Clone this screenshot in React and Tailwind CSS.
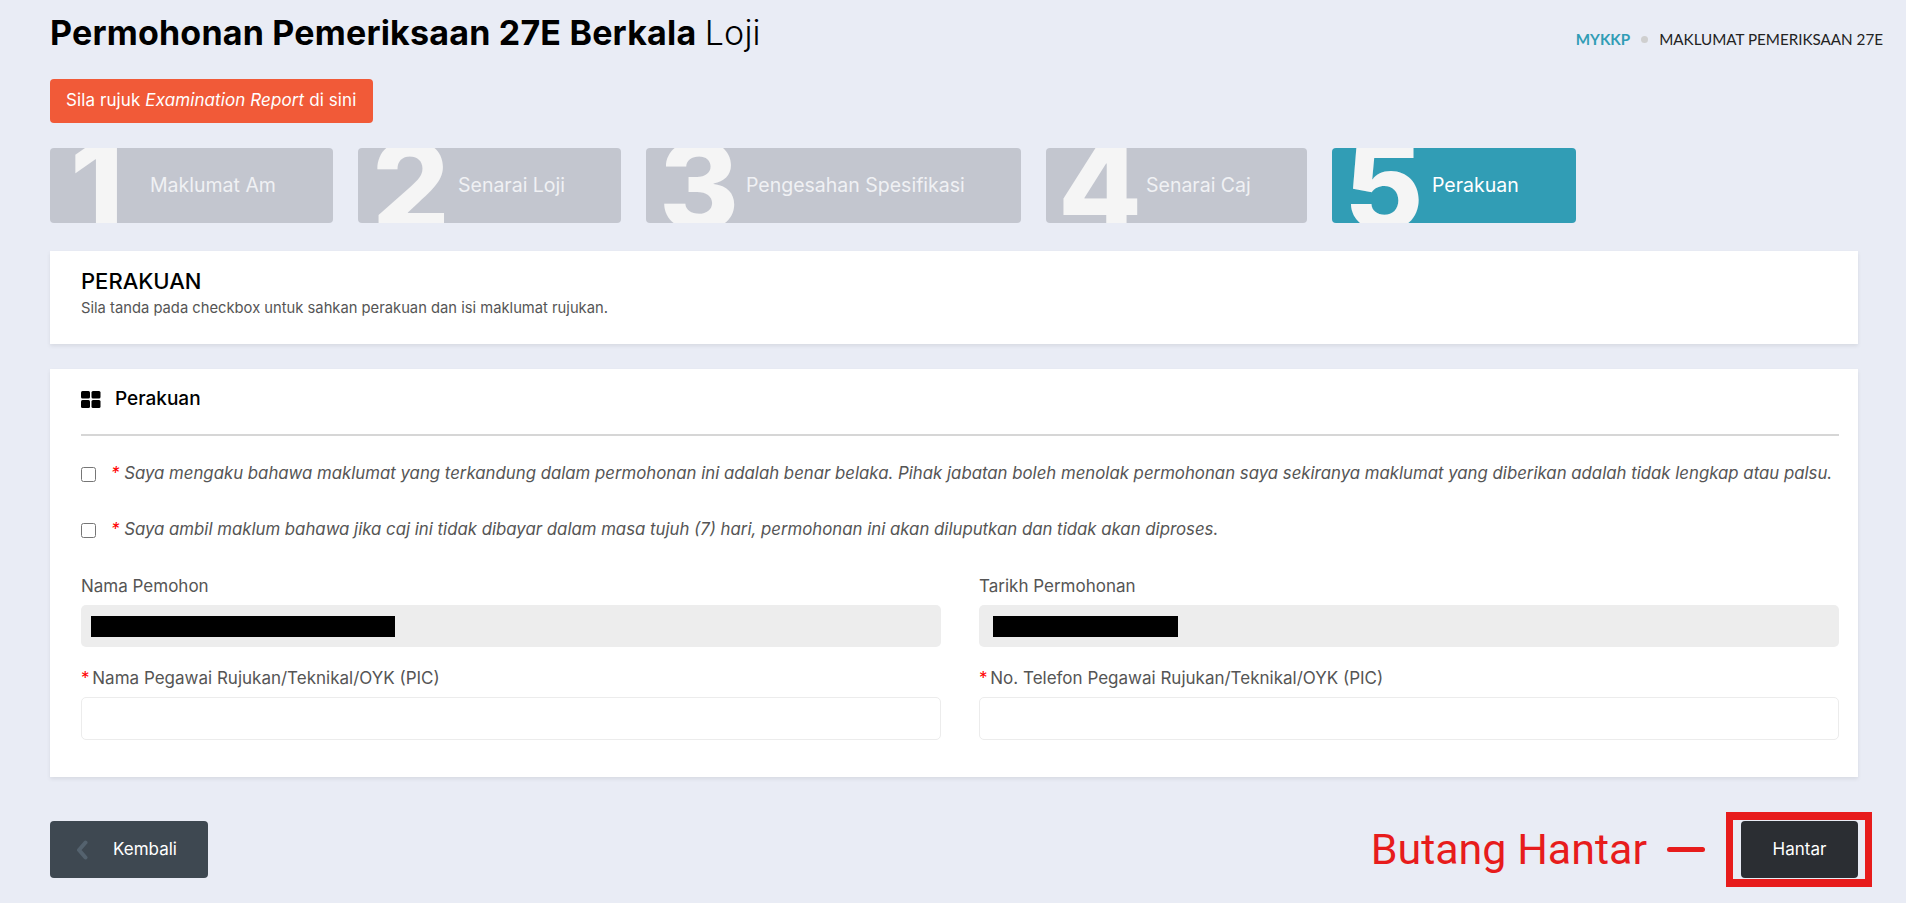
import React from 'react';

const steps = [
  { no: '1', label: 'Maklumat Am', width: 'w-[283px]', digit: 'pl-[20px]' },
  { no: '2', label: 'Senarai Loji', width: 'w-[263px]', digit: 'pl-[14px]' },
  { no: '3', label: 'Pengesahan Spesifikasi', width: 'w-[375px]', digit: 'pl-[13px]' },
  { no: '4', label: 'Senarai Caj', width: 'w-[261px]', digit: 'pl-[12px]' },
  { no: '5', label: 'Perakuan', width: 'w-[244px]', digit: 'pl-[12px]', active: true },
];

const Required = () => <span className="text-[#ff0000]">* </span>;

const App = () => {
  return (
    <div className="h-[903px] overflow-hidden bg-[#e9ecf5] pl-[50px] pr-[48px] font-['Inter',sans-serif] text-[#555]">
      {/* Page header */}
      <div className="flex items-start justify-between pt-[13px] h-[79px]">
        <h1 className="text-[34px] leading-[40px] font-bold text-black tracking-[0.2px]">
          Permohonan Pemeriksaan 27E Berkala <span className="font-light">Loji</span>
        </h1>
        <div className="flex items-center h-[26px] mt-[13px] -mr-[25px] font-['Lato',sans-serif] text-[15.2px] text-[#222]">
          <span className="font-bold text-[#319db5]">MYKKP</span>
          <span className="mx-[11px] w-[7px] h-[7px] rounded-full bg-[#cfcfcf]"></span>
          <span>MAKLUMAT PEMERIKSAAN 27E</span>
        </div>
      </div>

      <button className="block h-[44px] w-[323px] rounded-[4px] bg-[#f15a38] text-left pl-[16px] text-[17px] tracking-[0.1px] text-white">
        Sila rujuk <em>Examination Report</em> di sini
      </button>

      {/* Steps */}
      <div className="flex gap-[25px] mt-[25px]">
        {steps.map((step) => (
          <div
            key={step.no}
            className={`${step.width} flex items-center h-[75px] overflow-hidden rounded-[4px] ${
              step.active ? 'bg-[#319db5] text-white' : 'bg-[#c3c6cf] text-[#f0f1f4]'
            }`}
          >
            <span className={`${step.digit} w-[100px] shrink-0 text-[122px] leading-[75px] font-extrabold text-[#f5f5f5]`}>
              {step.no}
            </span>
            <span className="text-[19.5px] whitespace-nowrap">{step.label}</span>
          </div>
        ))}
      </div>

      {/* Title card */}
      <div className="mt-[28px] h-[93px] bg-white px-[31px] pt-[17px] shadow-[0_2px_4px_rgba(0,0,0,0.08)]">
        <h2 className="text-[22px] leading-[26px] font-medium text-black">PERAKUAN</h2>
        <p className="mt-[4px] text-[14.75px] leading-[20px] text-[#555]">
          Sila tanda pada checkbox untuk sahkan perakuan dan isi maklumat rujukan.
        </p>
      </div>

      {/* Form card */}
      <div className="mt-[25px] h-[408px] bg-white pl-[31px] pr-[19px] pt-[21px] shadow-[0_2px_4px_rgba(0,0,0,0.08)]">
        <div className="flex items-center gap-[14px] h-[18px] text-black">
          <svg viewBox="0 0 20 17" className="w-[20px] h-[17px]" fill="currentColor">
            <rect x="0" y="0" width="9" height="7.5" rx="1.5" />
            <rect x="10.5" y="0" width="9" height="7.5" rx="1.5" />
            <rect x="0" y="9" width="9" height="8" rx="1.5" />
            <rect x="10.5" y="9" width="9" height="8" rx="1.5" />
          </svg>
          <span className="text-[19px] font-medium">Perakuan</span>
        </div>
        <hr className="mt-[26px] border-0 h-[2px] bg-[#d6d6d6]" />

        <label className="flex items-center gap-[15px] mt-[28px] h-[20px] text-[16.8px] italic whitespace-nowrap">
          <input type="checkbox" className="w-[15px] h-[15px] m-0" />
          <span>
            <Required />
            Saya mengaku bahawa maklumat yang terkandung dalam permohonan ini adalah benar belaka. Pihak jabatan boleh menolak permohonan saya sekiranya maklumat yang diberikan adalah tidak lengkap atau palsu.
          </span>
        </label>
        <label className="flex items-center gap-[15px] mt-[36px] h-[20px] text-[16.8px] italic whitespace-nowrap">
          <input type="checkbox" className="w-[15px] h-[15px] m-0" />
          <span>
            <Required />
            Saya ambil maklum bahawa jika caj ini tidak dibayar dalam masa tujuh (7) hari, permohonan ini akan diluputkan dan tidak akan diproses.
          </span>
        </label>

        <div className="grid grid-cols-2 gap-x-[38px] mt-[36px] text-[17px]">
          <div>
            <div className="h-[20px] leading-[20px]">Nama Pemohon</div>
            <div className="flex items-center mt-[9px] h-[42px] rounded-[5px] bg-[#ededed] pl-[10px]">
              <div className="w-[304px] h-[21px] bg-black"></div>
            </div>
          </div>
          <div>
            <div className="h-[20px] leading-[20px]">Tarikh Permohonan</div>
            <div className="flex items-center mt-[9px] h-[42px] rounded-[5px] bg-[#ededed] pl-[14px]">
              <div className="w-[185px] h-[21px] bg-black"></div>
            </div>
          </div>
          <div className="mt-[21px]">
            <div className="h-[20px] leading-[20px]"><span className="text-[#ff0000] -mr-[2px]">* </span>Nama Pegawai Rujukan/Teknikal/OYK (PIC)</div>
            <input className="block w-full mt-[9px] h-[43px] rounded-[5px] border border-[#ececec] bg-white" />
          </div>
          <div className="mt-[21px]">
            <div className="h-[20px] leading-[20px]"><span className="text-[#ff0000] -mr-[2px]">* </span>No. Telefon Pegawai Rujukan/Teknikal/OYK (PIC)</div>
            <input className="block w-full mt-[9px] h-[43px] rounded-[5px] border border-[#ececec] bg-white" />
          </div>
        </div>
      </div>

      {/* Footer actions */}
      <div className="flex items-center justify-between mt-[44px] h-[57px]">
        <button className="flex items-center w-[158px] h-[57px] rounded-[4px] bg-[#3e4851] pl-[26px] text-[17px] text-white">
          <svg viewBox="0 0 12 20" className="w-[12px] h-[20px] text-[#54626e]" fill="none" stroke="currentColor" strokeWidth="4" strokeLinecap="round" strokeLinejoin="round">
            <path d="M9.5 2.5 3 10l6.5 7.5" />
          </svg>
          <span className="ml-[25px]">Kembali</span>
        </button>

        <div className="flex items-center -mr-[14px]">
          <span className="font-['Roboto',sans-serif] text-[43px] leading-none text-[#e71c1c]">Butang Hantar</span>
          <span className="ml-[20px] w-[38px] h-[5px] rounded-full bg-[#e71c1c]"></span>
          <div className="ml-[21px] border-x-[7px] border-y-[8px] border-[#e71c1c] pl-[8px] pr-[7px] py-px -my-[9px]">
            <button className="block w-[117px] h-[57px] rounded-[4px] bg-[#2b2e33] text-[17px] text-white">Hantar</button>
          </div>
        </div>
      </div>
    </div>
  );
};

export default App;
